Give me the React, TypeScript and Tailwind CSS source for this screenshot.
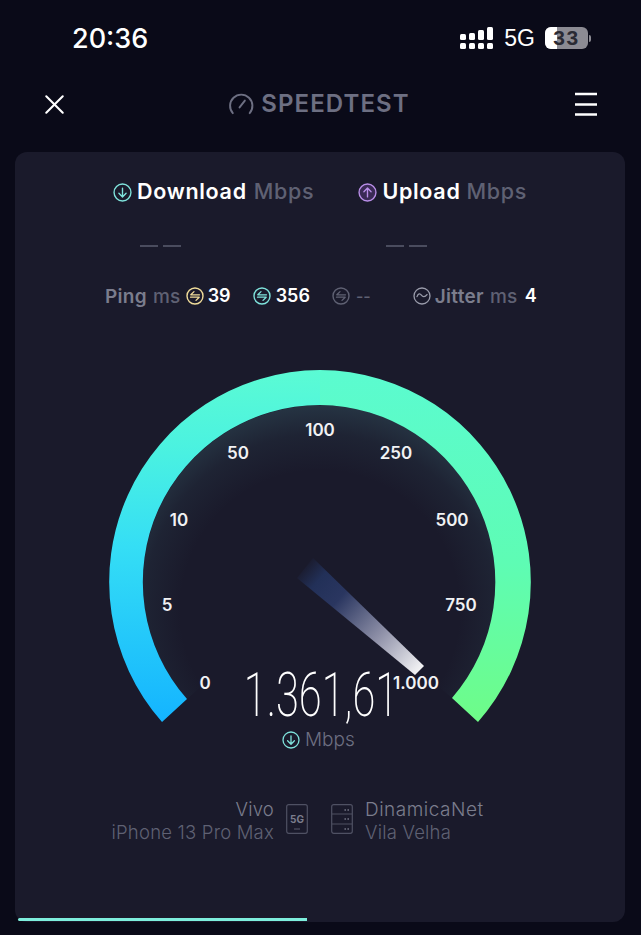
import { X } from "lucide-react"

const sans = "font-['Inter','Liberation_Sans',sans-serif]"

// circle icons in the stats header
function ArrowCircle({ color, up, size = 18, fill }: { color: string; up?: boolean; size?: number; fill?: string }) {
  return (
    <svg width={size} height={size} viewBox="0 0 18 18" fill="none" className="shrink-0">
      <circle cx="9" cy="9" r="8" stroke={color} strokeWidth="1.3" fill={fill ?? "none"} />
      {up ? (
        <path d="M9 13.2V5M5.6 8.2 9 4.8l3.4 3.4" stroke={color} strokeWidth="1.3" strokeLinecap="round" strokeLinejoin="round" />
      ) : (
        <path d="M9 4.8V13M5.6 9.8 9 13.2l3.4-3.4" stroke={color} strokeWidth="1.3" strokeLinecap="round" strokeLinejoin="round" />
      )}
    </svg>
  )
}

function PingIcon({ color }: { color: string }) {
  return (
    <svg width="18" height="18" viewBox="0 0 18 18" fill="none" className="shrink-0">
      <circle cx="9" cy="9" r="8" stroke={color} strokeWidth="1.4" />
      <path d="M13.5 7.8H4.8L8 4.6M4.5 10.2h8.7L10 13.4" stroke={color} strokeWidth="1.3" strokeLinecap="round" strokeLinejoin="round" />
    </svg>
  )
}

function JitterIcon({ color }: { color: string }) {
  return (
    <svg width="18" height="18" viewBox="0 0 18 18" fill="none" className="shrink-0">
      <circle cx="9" cy="9" r="8" stroke={color} strokeWidth="1.3" />
      <path d="M4 9.6c1.2-3.4 3-3.4 4.4-1.4s3.4 2.2 5.6-.6" stroke={color} strokeWidth="1.3" strokeLinecap="round" />
    </svg>
  )
}

function SignalDots() {
  const cols = [0, 1, 2, 3]
  return (
    <svg width="34" height="23" viewBox="0 0 34 23" fill="white">
      {cols.map((c) => (
        <rect key={c} x={c * 9} y="16" width="6" height="6" rx="1.5" />
      ))}
      <rect x="0" y="7" width="6" height="6" rx="1.5" />
      <rect x="9" y="6" width="6" height="7" rx="1.5" />
      <rect x="18" y="3" width="6" height="10" rx="1.5" />
      <rect x="27" y="0" width="6" height="13" rx="1.5" />
    </svg>
  )
}

function Gauge() {
  const cx = 212
  const labels: [string, number, number][] = [
    ["0", 97, 319],
    ["5", 59, 241],
    ["10", 71, 156],
    ["50", 130, 89],
    ["100", 212, 66],
    ["250", 288, 89],
    ["500", 344, 156],
    ["750", 353, 241],
    ["1.000", 308, 319],
  ]
  return (
    <svg width="424" height="360" viewBox="0 0 424 360" fill="none">
      <defs>
        <linearGradient id="leftArc" x1="0" y1="352" x2="0" y2="0" gradientUnits="userSpaceOnUse">
          <stop offset="0" stopColor="#14b4ff" />
          <stop offset="0.5" stopColor="#35def5" />
          <stop offset="0.78" stopColor="#4bf2e0" />
          <stop offset="1" stopColor="#5bfbd4" />
        </linearGradient>
        <linearGradient id="rightArc" x1="0" y1="0" x2="0" y2="352" gradientUnits="userSpaceOnUse">
          <stop offset="0" stopColor="#5bfbd0" />
          <stop offset="0.55" stopColor="#5efcb4" />
          <stop offset="1" stopColor="#6efc88" />
        </linearGradient>
        {/* glow sits low so it is wider under the top of the arc */}
        <radialGradient id="glow" cx={cx} cy="240" r="205" gradientUnits="userSpaceOnUse">
          <stop offset="0.68" stopColor="#4f9098" stopOpacity="0" />
          <stop offset="0.86" stopColor="#4f9098" stopOpacity="0.08" />
          <stop offset="1" stopColor="#4f9098" stopOpacity="0.22" />
        </radialGradient>
        <linearGradient id="needle" x1="197" y1="198" x2="311" y2="300" gradientUnits="userSpaceOnUse">
          <stop offset="0" stopColor="#223058" stopOpacity="0.15" />
          <stop offset="0.12" stopColor="#223058" />
          <stop offset="0.3" stopColor="#2a3660" />
          <stop offset="0.65" stopColor="#8c8ea6" />
          <stop offset="1" stopColor="#f2f2f4" />
        </linearGradient>
      </defs>
      <path d="M79 329A177 177 0 1 1 345 329L212 212Z" fill="url(#glow)" />
      <path d="M54 352A212 212 0 0 1 212 0V35A177 177 0 0 0 79 329Z" fill="url(#leftArc)" />
      <path d="M212 0A212 212 0 0 1 370 352L344 328A177 177 0 0 0 212 35Z" fill="url(#rightArc)" />
      <path d="M189 208 205 188 316 296 307 305Z" fill="url(#needle)" />
      {labels.map(([text, x, y]) => (
        <text key={text} x={x} y={y} textAnchor="middle" fill="#f1f2f4" fontSize="17" fontWeight="600" fontFamily="Inter, 'Liberation Sans', sans-serif">
          {text}
        </text>
      ))}
    </svg>
  )
}

export default function App() {
  return (
    <div className={`${sans} w-[641px] h-[935px] overflow-hidden bg-[#0a0a18] text-white flex flex-col`}>
      {/* status bar */}
      <div className="h-[76px] shrink-0 flex items-center pl-[72px] pr-[50px]">
        <span className="text-[27px] leading-none font-medium">20:36</span>
        <div className="ml-auto flex items-center">
          <SignalDots />
          <span className="ml-[10px] text-[23px] leading-none font-['Liberation_Sans',sans-serif]">5G</span>
          <div className="ml-[10px] w-[43px] h-[22px] rounded-[6px] overflow-hidden bg-[#8c8b93] relative flex items-center justify-center">
            <div className="absolute left-0 top-0 bottom-0 w-[12px] bg-white" />
            <span className="relative text-[21px] leading-[20px] tracking-[1.5px] font-semibold text-[#2a2a33] font-['Liberation_Sans',sans-serif]">33</span>
          </div>
          <div className="ml-[1px] w-[2px] h-[7px] rounded-r bg-[#8c8b93]" />
        </div>
      </div>

      {/* nav */}
      <div className="h-[76px] shrink-0 flex items-center justify-between pl-[38px] pr-[44px] pb-[20px]">
        <X size={33} strokeWidth={1.5} />
        <div className="flex items-center gap-[7px] mr-[8px] text-[#6d6f82]">
          <svg width="26" height="24" viewBox="0 0 27 24" fill="none" stroke="#6d6f82" strokeWidth="2" strokeLinecap="round">
            <path d="M5 21.5A11.6 11.6 0 1 1 22.5 21.5" />
            <path d="M12 15.5 17.5 8.5" />
          </svg>
          <span className="text-[24px] leading-none font-semibold tracking-[1.1px]">SPEEDTEST</span>
        </div>
        <svg width="22" height="24" viewBox="0 0 22 24" stroke="white" strokeWidth="2.4">
          <path d="M0 2h22M0 12.5h22M0 22.5h22" />
        </svg>
      </div>

      {/* card */}
      <div className="relative ml-[15px] w-[610px] h-[770px] rounded-[12px] bg-[#1a1a2b] flex flex-col items-center">
        <div className="mt-[28px] w-full h-[24px] flex items-center pl-[98px] text-[21.5px] tracking-[0.7px] leading-none">
          <ArrowCircle color="#7fe3dc" size={19} />
          <span className="ml-[5px] font-semibold">Download</span>
          <span className="ml-[7px] font-medium text-[#5f6173]">Mbps</span>
          <div className="ml-[44px] flex items-center">
            <ArrowCircle color="#b98ee8" up fill="#3a2a55" size={19} />
            <span className="ml-[5px] font-semibold">Upload</span>
            <span className="ml-[6px] font-medium text-[#5f6173]">Mbps</span>
          </div>
        </div>

        <div className="mt-[41px] w-full flex pl-[125px] gap-[205px]">
          <div className="flex gap-[5px]">
            <div className="w-[18px] h-[2px] bg-[#4a4c5e]" />
            <div className="w-[18px] h-[2px] bg-[#4a4c5e]" />
          </div>
          <div className="flex gap-[5px]">
            <div className="w-[18px] h-[2px] bg-[#4a4c5e]" />
            <div className="w-[18px] h-[2px] bg-[#4a4c5e]" />
          </div>
        </div>

        <div className="mt-[39px] w-full h-[20px] flex items-center pl-[90px] text-[19px] leading-none tracking-[0.3px]">
          <span className="font-semibold text-[#7b7d8d]">Ping</span>
          <span className="ml-[6px] font-medium text-[#5f6173]">ms</span>
          <div className="ml-[5px]"><PingIcon color="#f0dc9a" /></div>
          <span className="ml-[4px] text-[18px] tracking-normal font-semibold">39</span>
          <div className="ml-[22px]"><PingIcon color="#7fe3dc" /></div>
          <span className="ml-[5px] text-[18px] tracking-normal font-semibold">356</span>
          <div className="ml-[22px]"><PingIcon color="#5f6173" /></div>
          <span className="ml-[6px] text-[16px] tracking-normal font-medium text-[#5f6173]">--</span>
          <div className="ml-[42px]"><JitterIcon color="#9a9cab" /></div>
          <span className="ml-[4px] font-semibold text-[#7b7d8d]">Jitter</span>
          <span className="ml-[6px] font-medium text-[#5f6173]">ms</span>
          <span className="ml-[7px] text-[18px] tracking-normal font-semibold">4</span>
        </div>

        <div className="mt-[64px] relative">
          <Gauge />
          <div className="absolute left-[135px] top-[297px] w-[156px] text-center text-[62px] leading-[56px] font-extralight font-['Roboto',sans-serif] scale-x-[0.67] whitespace-nowrap flex justify-center">
            1.361,61
          </div>
          <div className="absolute left-[174px] top-[360px] flex items-center gap-[5px]">
            <ArrowCircle color="#7fe3dc" />
            <span className="text-[19px] leading-none font-light text-[#6d6f82]">Mbps</span>
          </div>
        </div>

        <div className="absolute top-[646px] left-0 w-full flex">
          <div className="w-[259px] text-right text-[18.5px] tracking-[0.2px] leading-[23px] font-light text-[#7b7d8d]">
            <div>Vivo</div>
            <div className="text-[#5f6173]">iPhone 13 Pro Max</div>
          </div>
          <svg width="22" height="30" viewBox="0 0 22 30" fill="none" className="ml-[12px] mt-[6px]">
            <rect x="0.7" y="0.7" width="20.6" height="28.6" rx="2" stroke="#4f5163" strokeWidth="1.2" />
            <path d="M8 25h6" stroke="#4f5163" strokeWidth="1.2" />
            <text x="11" y="19" textAnchor="middle" fontSize="10" fontWeight="700" fill="#7b7d8d" fontFamily="Inter, sans-serif">5G</text>
          </svg>
          <svg width="22" height="30" viewBox="0 0 22 30" fill="none" className="ml-[23px] mt-[6px]">
            <rect x="0.7" y="0.7" width="20.6" height="28.6" rx="2" stroke="#4f5163" strokeWidth="1.2" />
            <path d="M1 10h20M1 20h20" stroke="#4f5163" strokeWidth="1.2" />
            <path d="M13.5 6h1.4M16.5 6h1.4M13.5 15h1.4M16.5 15h1.4M13.5 25h1.4M16.5 25h1.4" stroke="#7b7d8d" strokeWidth="1.4" />
          </svg>
          <div className="ml-[12px] leading-[23px] font-light">
            <div className="text-[19px] tracking-[0.5px] text-[#7b7d8d]">DinamicaNet</div>
            <div className="text-[18.5px] tracking-[0.2px] text-[#5f6173]">Vila Velha</div>
          </div>
        </div>

        <div className="absolute left-[3px] bottom-[1px] w-[289px] h-[3px] rounded-l-full bg-[#7eeedd]" />
      </div>
    </div>
  )
}
